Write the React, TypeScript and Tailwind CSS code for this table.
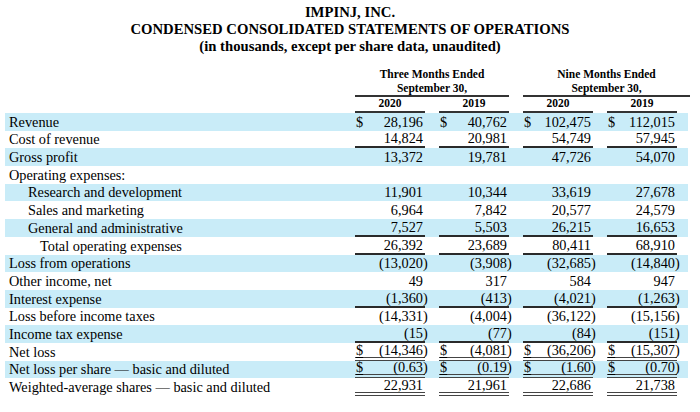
import React from "react";

type Line = "none" | "single" | "double";
type Row = {
  label: string;
  indent: number;
  vals: string[];
  dollar?: boolean;
  ulDollar?: boolean;
  line: Line;
};

const rows: Row[] = [
  { label: "Revenue", indent: 0, vals: ["28,196", "40,762", "102,475", "112,015"], dollar: true, line: "none" },
  { label: "Cost of revenue", indent: 0, vals: ["14,824", "20,981", "54,749", "57,945"], line: "single" },
  { label: "Gross profit", indent: 0, vals: ["13,372", "19,781", "47,726", "54,070"], line: "none" },
  { label: "Operating expenses:", indent: 0, vals: ["", "", "", ""], line: "none" },
  { label: "Research and development", indent: 1, vals: ["11,901", "10,344", "33,619", "27,678"], line: "none" },
  { label: "Sales and marketing", indent: 1, vals: ["6,964", "7,842", "20,577", "24,579"], line: "none" },
  { label: "General and administrative", indent: 1, vals: ["7,527", "5,503", "26,215", "16,653"], line: "single" },
  { label: "Total operating expenses", indent: 2, vals: ["26,392", "23,689", "80,411", "68,910"], line: "single" },
  { label: "Loss from operations", indent: 0, vals: ["(13,020)", "(3,908)", "(32,685)", "(14,840)"], line: "none" },
  { label: "Other income, net", indent: 0, vals: ["49", "317", "584", "947"], line: "none" },
  { label: "Interest expense", indent: 0, vals: ["(1,360)", "(413)", "(4,021)", "(1,263)"], line: "single" },
  { label: "Loss before income taxes", indent: 0, vals: ["(14,331)", "(4,004)", "(36,122)", "(15,156)"], line: "none" },
  { label: "Income tax expense", indent: 0, vals: ["(15)", "(77)", "(84)", "(151)"], line: "single" },
  { label: "Net loss", indent: 0, vals: ["(14,346)", "(4,081)", "(36,206)", "(15,307)"], dollar: true, ulDollar: true, line: "double" },
  { label: "Net loss per share \u2014 basic and diluted", indent: 0, vals: ["(0.63)", "(0.19)", "(1.60)", "(0.70)"], dollar: true, ulDollar: true, line: "double" },
  { label: "Weighted-average shares \u2014 basic and diluted", indent: 0, vals: ["22,931", "21,961", "22,686", "21,738"], line: "double" },
];

function Value({ v }: { v: string }) {
  if (!v) return null;
  if (v.startsWith("(")) {
    return (
      <span className="flex">
        <span>{v.slice(0, -1)}</span>
        <span className="w-0 overflow-visible whitespace-nowrap">)</span>
      </span>
    );
  }
  return <span>{v}</span>;
}

function Cell({ v, row }: { v: string; row: Row }) {
  const lineCls =
    row.line === "single"
      ? "border-b-[2px] border-[#2a2a2a]"
      : row.line === "double"
      ? "border-b-[4px] border-double border-[#444]"
      : "";
  return (
    <div className="flex-none w-[84px] h-full flex">
      <div className={`w-[70px] h-full flex items-center justify-between pl-[1px] pr-[2px] ${lineCls}`}>
        <span className={row.ulDollar ? "underline decoration-1 underline-offset-[2px]" : ""}>
          {row.dollar ? "$" : ""}
        </span>
        <Value v={v} />
      </div>
    </div>
  );
}

export default function App() {
  return (
    <div
      className="w-[700px] h-[412px] bg-white text-black overflow-hidden"
      style={{ fontFamily: '"Liberation Serif", "Times New Roman", serif' }}
    >
      <div className="pt-[4px] flex flex-col items-center font-bold text-[14.7px] leading-[17px]">
        <div>IMPINJ, INC.</div>
        <div>CONDENSED CONSOLIDATED STATEMENTS OF OPERATIONS</div>
        <div>(in thousands, except per share data, unaudited)</div>
      </div>

      <div className="mt-[12px] flex font-bold text-[11.5px]">
        <div className="w-[355px] flex-none" />
        <div className="w-[154px] flex-none flex flex-col items-center border-b-[2px] border-[#333] leading-[14px]">
          <div>Three Months Ended</div>
          <div>September 30,</div>
        </div>
        <div className="w-[14px] flex-none" />
        <div className="w-[167px] flex-none flex flex-col items-center border-b-[2px] border-[#333] leading-[14px]">
          <div>Nine Months Ended</div>
          <div>September 30,</div>
        </div>
      </div>
      <div className="flex font-bold text-[11.5px] h-[16px]">
        <div className="w-[355px] flex-none" />
        {["2020", "2019", "2020", "2019"].map((y, i) => (
          <div key={i} className="w-[84px] flex-none">
            <div className="w-[70px] h-full flex items-center justify-center border-b-[2px] border-[#333]">{y}</div>
          </div>
        ))}
      </div>

      <div className="flex flex-col text-[14.3px] leading-none">
        {rows.map((r, i) => (
          <div
            key={i}
            className={`ml-[5px] w-[683px] h-[17.7px] flex items-stretch ${i % 2 === 0 ? "bg-[#c9ecf8]" : ""}`}
          >
            <div
              className={`w-[350px] flex-none flex items-center pl-[4px] whitespace-nowrap ${
                r.indent === 1 ? "pl-[23px]" : r.indent === 2 ? "pl-[35px]" : ""
              }`}
            >
              {r.label}
            </div>
            {r.vals.map((v, j) => (
              <Cell key={j} v={v} row={r} />
            ))}
          </div>
        ))}
      </div>
    </div>
  );
}
